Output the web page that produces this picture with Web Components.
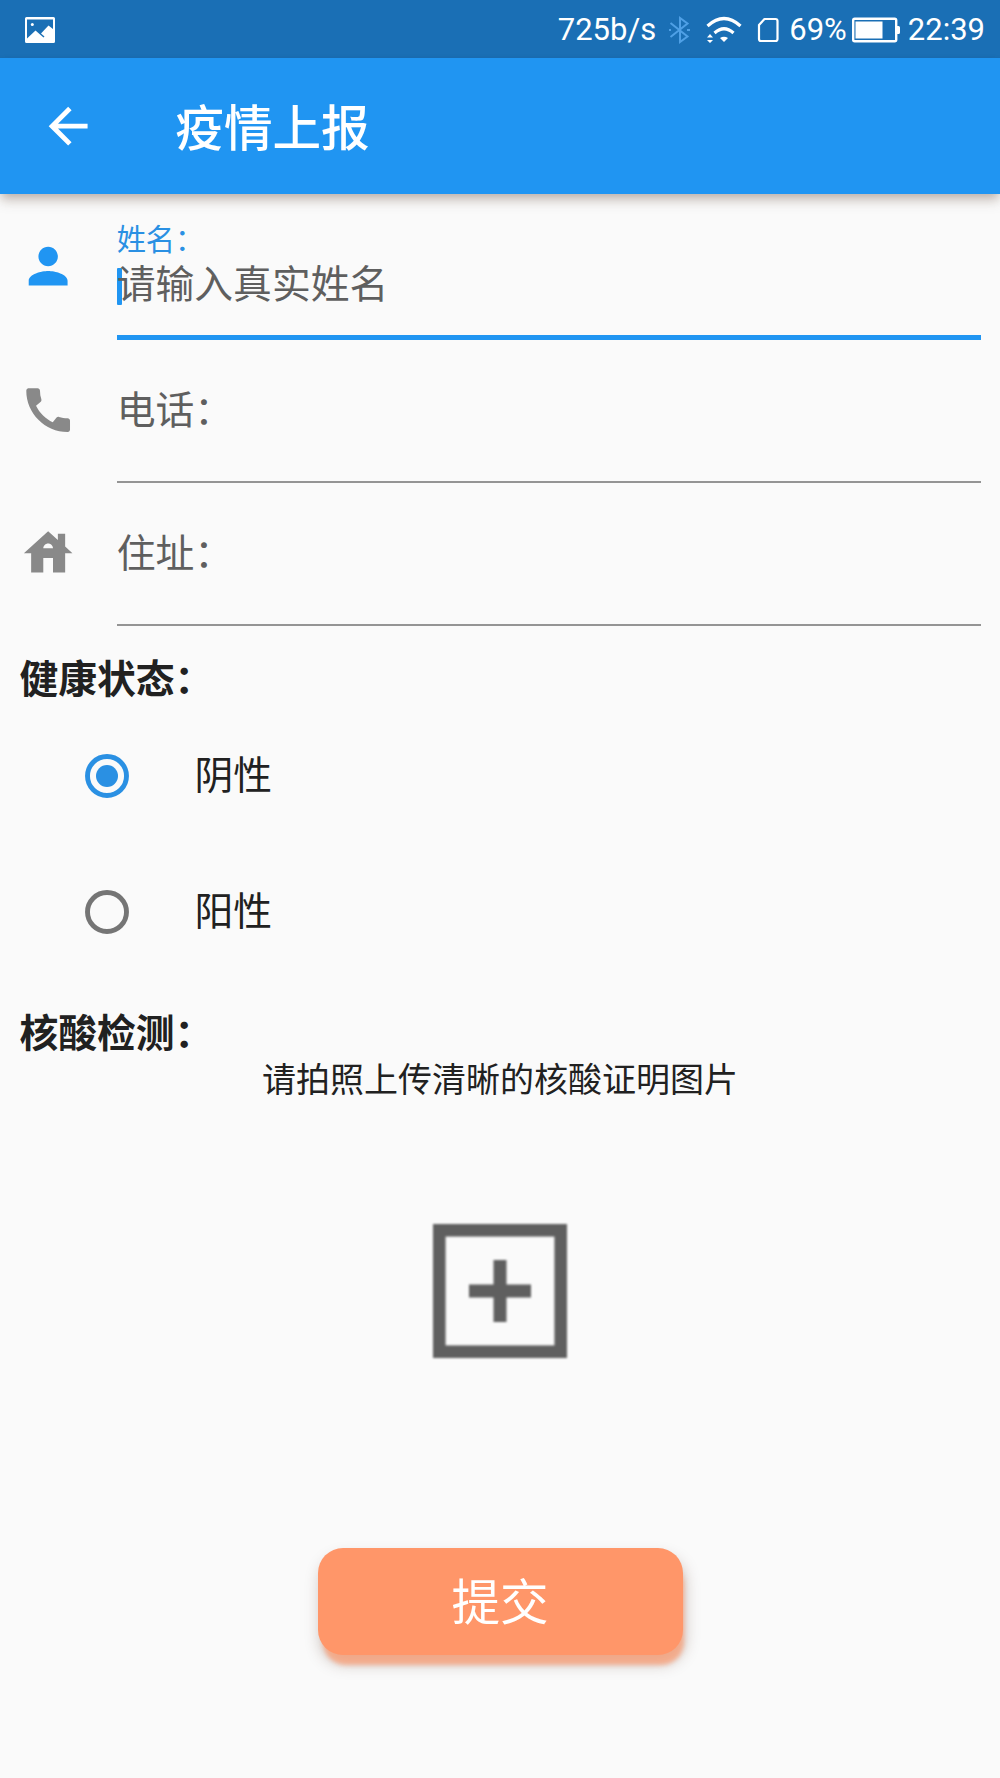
<!DOCTYPE html>
<html lang="zh-CN">
<head>
<meta charset="utf-8">
<meta name="viewport" content="width=device-width, initial-scale=1">
<title>疫情上报</title>
<style>
  body {
    margin: 0;
    background: #fafafa;
    color: #212121;
    font-family: Roboto, "Noto Sans CJK SC", sans-serif;
    font-size: 38.8px;
  }
</style>
</head>
<body>
<report-page>
  <status-bar slot="status" speed="725b/s" battery="69%" time="22:39"></status-bar>
  <app-bar slot="header">疫情上报</app-bar>

  <form-field icon="person" focused>
    <span slot="label">姓名：</span>
    <span slot="hint">请输入真实姓名</span>
  </form-field>
  <form-field icon="phone"><span slot="label">电话：</span></form-field>
  <form-field icon="house"><span slot="label">住址：</span></form-field>

  <section-title>健康状态：</section-title>
  <radio-tile checked>阴性</radio-tile>
  <radio-tile>阳性</radio-tile>

  <section-title class="upload">核酸检测：</section-title>
  <photo-upload>请拍照上传清晰的核酸证明图片</photo-upload>
  <submit-button>提交</submit-button>
</report-page>

<script>
const icons = {
  person: 'M12 12c2.21 0 4-1.79 4-4s-1.79-4-4-4-4 1.79-4 4 1.79 4 4 4zm0 2c-2.67 0-8 1.34-8 4v2h16v-2c0-2.66-5.33-4-8-4z',
  phone: 'M20.01 15.38c-1.23 0-2.42-.2-3.53-.56-.35-.12-.74-.03-1.01.24l-1.57 1.97c-2.83-1.35-5.48-3.9-6.89-6.83l1.95-1.66c.27-.28.35-.67.24-1.02-.37-1.11-.56-2.3-.56-3.53 0-.54-.45-.99-.99-.99H4.19C3.65 3 3 3.24 3 3.99 3 13.28 10.73 21 20.01 21c.71 0 .99-.63.99-1.18v-3.45c0-.54-.45-.99-.99-.99z',
  house: 'M19 9.3V4h-3v2.6L12 3 2 12h3v8h5v-6h4v6h5v-8h3l-3-2.7zm-9 .7c0-1.1.9-2 2-2s2 .9 2 2h-4z',
  back: 'M20 11H7.83l5.59-5.59L12 4l-8 8 8 8 1.41-1.41L7.83 13H20v-2z'
};

function attach(el, html) {
  el.attachShadow({ mode: 'open' }).innerHTML = html;
}

class ReportPage extends HTMLElement {
  constructor() {
    super();
    attach(this, `
      <style>
        :host {
          display: block;
          height: 1778px;
          overflow: hidden;
        }
        main {
          display: flex;
          flex-direction: column;
          padding: 3px 19.4px 0;
        }
        ::slotted(.upload) {
          height: 54px;
          margin-top: 2.5px;
        }
      </style>
      <slot name="status"></slot>
      <slot name="header"></slot>
      <main><slot></slot></main>
    `);
  }
}

class StatusBar extends HTMLElement {
  constructor() {
    super();
    attach(this, `
      <style>
        :host {
          display: flex;
          align-items: center;
          box-sizing: border-box;
          height: 58px;
          padding: 1px 15px 0 25px;
          background: #1a6fb5;
          color: #fff;
          font-size: 31px;
          line-height: 58px;
        }
        svg { display: block; flex: none; }
        .photo { margin-right: auto; }
        .bt { margin: 0 16px 0 13px; }
        .wifi { margin-right: 14.5px; }
        .sim { margin-right: 10.5px; }
        .battery { margin: 0 8px 0 5px; }
      </style>
      <svg class="photo" width="30" height="26" viewBox="0 0 30 26">
        <path fill="#fff" fill-rule="evenodd" d="M1.5 0h27Q30 0 30 1.500v23Q30 26 28.500 26h-27Q0 26 0 24.500v-23Q0 0 1.500 0zM2 2.500V21.500L10.500 13.500L18.500 20.500L19.500 19.500L16 16.500L23.500 8.500L28 12V2.500z"/>
        <circle cx="7.300" cy="7.500" r="1.500" fill="#fff"/>
      </svg>
      <span id="speed"></span>
      <svg class="bt" width="21" height="28" viewBox="0 0 21 28">
        <path fill="none" stroke="#4fa0e6" stroke-width="2" d="M1.500 7l17 13.500L11 26V2l7.500 5.500L1.500 21M0 14h2M18 14h3"/>
      </svg>
      <svg class="wifi" width="36" height="28" viewBox="0 0 36 28">
        <g fill="none" stroke="#fff" stroke-width="3.200">
          <path d="M1.500 10q16.500-15 33 0"/>
          <path d="M8.500 17q9.500-8.500 19 0"/>
        </g>
        <path fill="#fff" d="M14 22q4-2.500 8 0l-4 4zM1 21.500l3-3.500L7 21.500zM1 24h6l-3 3z"/>
      </svg>
      <svg class="sim" width="22" height="26" viewBox="0 0 22 26">
        <path fill="none" stroke="#fff" stroke-width="2.200" stroke-linejoin="round" d="M7.500 2H18.500Q20.500 2 20.500 4V22Q20.500 24 18.500 24H4Q2 24 2 22V8z"/>
      </svg>
      <span id="level"></span>
      <svg class="battery" width="48" height="26" viewBox="0 0 48 26">
        <rect x="1.200" y="1.700" width="43" height="22.600" rx="1.500" fill="none" stroke="#fff" stroke-width="2.400"/>
        <path fill="#fff" d="M3.500 4.500h27v17h-27zM45 9h1.500q1.500 0 1.500 1.500v5q0 1.500-1.500 1.500H45z"/>
      </svg>
      <span id="time"></span>
    `);
  }

  connectedCallback() {
    this.shadowRoot.getElementById('speed').textContent = this.getAttribute('speed');
    this.shadowRoot.getElementById('level').textContent = this.getAttribute('battery');
    this.shadowRoot.getElementById('time').textContent = this.getAttribute('time');
  }
}

class AppBar extends HTMLElement {
  constructor() {
    super();
    attach(this, `
      <style>
        :host {
          display: flex;
          align-items: center;
          box-sizing: border-box;
          height: 136px;
          padding: 1px 0 0 39px;
          gap: 78px;
          background: #2095f2;
          color: #fff;
          font-size: 48.6px;
          font-weight: 500;
          line-height: 58px;
          box-shadow: 0 5px 10px -2px rgba(70, 35, 20, .3), 0 9px 12px rgba(70, 35, 20, .1);
        }
        svg { display: block; }
        .title { padding-top: 6px; }
      </style>
      <svg width="58.300" height="58.300" viewBox="0 0 24 24"><path fill="#fff" d="${icons.back}"/></svg>
      <span class="title"><slot></slot></span>
    `);
  }
}

class FormField extends HTMLElement {
  connectedCallback() {
    attach(this, `
      <style>
        :host {
          display: flex;
          height: 143.500px;
          color: #5f5f5f;
        }
        svg {
          flex: none;
          display: block;
          width: 58.300px;
          height: 58.300px;
          margin: 40px 39px 0 0;
          fill: #898989;
        }
        .input {
          flex: 1;
          height: 142px;
          border-bottom: 2.500px solid #949494;
          line-height: 46px;
          box-sizing: border-box;
          padding-top: 47px;
        }
        .hint { display: none; }
        :host([focused]) svg { fill: #2095f2; }
        :host([focused]) .input {
          height: 143px;
          border-bottom: 5px solid #2095f2;
          padding-top: 26px;
        }
        :host([focused]) .label {
          color: #2a90e3;
          font-size: 29.200px;
          line-height: 35px;
          height: 35px;
        }
        :host([focused]) .hint {
          display: flex;
          align-items: center;
          height: 54px;
        }
        /* the caret takes no room, the hint starts underneath it */
        .caret {
          order: -1;
          width: 5px;
          height: 37px;
          margin: 2px -5px 0 0;
          border-radius: 1px;
          background: #2095f2;
        }
      </style>
      <svg viewBox="0 0 24 24"><path d="${icons[this.getAttribute('icon')]}"/></svg>
      <div class="input">
        <div class="label"><slot name="label"></slot></div>
        <div class="hint"><slot name="hint"></slot><i class="caret"></i></div>
      </div>
    `);
  }
}

class SectionTitle extends HTMLElement {
  constructor() {
    super();
    attach(this, `
      <style>
        :host {
          display: block;
          height: 56px;
          padding-top: 24px;
          font-weight: 700;
          line-height: 56px;
        }
      </style>
      <slot></slot>
    `);
  }
}

class RadioTile extends HTMLElement {
  constructor() {
    super();
    attach(this, `
      <style>
        :host {
          display: flex;
          align-items: center;
          height: 136.200px;
          padding-left: 65.500px;
          gap: 65.500px;
          line-height: 56px;
        }
        svg { display: block; fill: none; stroke: #757575; }
        span { padding-top: 1px; }
        circle + circle { display: none; }
        :host([checked]) svg { stroke: #2a90e3; }
        :host([checked]) circle + circle { display: inline; fill: #2a90e3; stroke: none; }
      </style>
      <svg width="44" height="44" viewBox="0 0 44 44">
        <circle cx="22" cy="22" r="19.500" stroke-width="4.900"/>
        <circle cx="22" cy="22" r="11"/>
      </svg>
      <span><slot></slot></span>
    `);
  }
}

class PhotoUpload extends HTMLElement {
  constructor() {
    super();
    attach(this, `
      <style>
        :host {
          display: flex;
          flex-direction: column;
          align-items: center;
          font-size: 34px;
          line-height: 40px;
        }
        svg { display: block; margin-top: 122.500px; filter: blur(.9px); }
      </style>
      <span><slot></slot></span>
      <svg width="136" height="136" viewBox="0 0 136 136">
        <rect x="7.300" y="7.300" width="121.400" height="121.400" fill="none" stroke="#5f5f5f" stroke-width="12.600"/>
        <path stroke="#5f5f5f" stroke-width="13" d="M37 68h62M68 37v62"/>
      </svg>
    `);
  }
}

class SubmitButton extends HTMLElement {
  constructor() {
    super();
    attach(this, `
      <style>
        :host {
          display: block;
          align-self: center;
          margin-top: 189.500px;
        }
        button {
          display: block;
          width: 365px;
          height: 107px;
          padding: 5px 0 0;
          border: 0;
          border-radius: 25px;
          background: #ff9669;
          color: #fff;
          font: inherit;
          font-size: 48.600px;
          line-height: 102px;
          box-shadow: 3px 12px 4px -2px rgba(255, 150, 105, .65), 2px 9px 15px rgba(70, 35, 20, .26);
        }
      </style>
      <button type="button"><slot></slot></button>
    `);
  }
}

customElements.define('report-page', ReportPage);
customElements.define('status-bar', StatusBar);
customElements.define('app-bar', AppBar);
customElements.define('form-field', FormField);
customElements.define('section-title', SectionTitle);
customElements.define('radio-tile', RadioTile);
customElements.define('photo-upload', PhotoUpload);
customElements.define('submit-button', SubmitButton);
</script>
</body>
</html>
